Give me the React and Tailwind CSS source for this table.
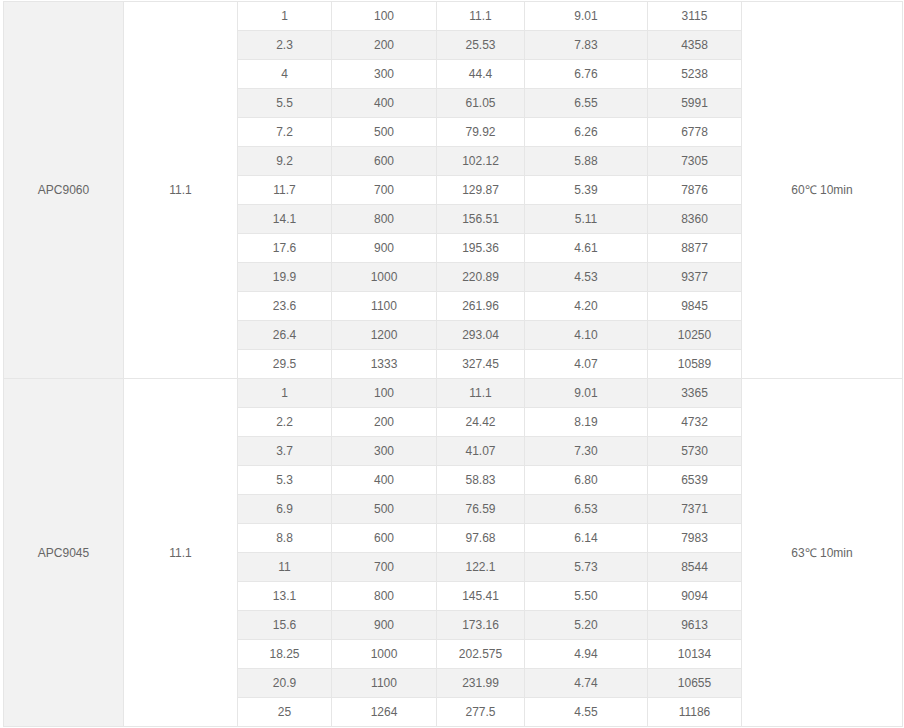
import React from "react";

const g1 = [
  ["1", "100", "11.1", "9.01", "3115"],
  ["2.3", "200", "25.53", "7.83", "4358"],
  ["4", "300", "44.4", "6.76", "5238"],
  ["5.5", "400", "61.05", "6.55", "5991"],
  ["7.2", "500", "79.92", "6.26", "6778"],
  ["9.2", "600", "102.12", "5.88", "7305"],
  ["11.7", "700", "129.87", "5.39", "7876"],
  ["14.1", "800", "156.51", "5.11", "8360"],
  ["17.6", "900", "195.36", "4.61", "8877"],
  ["19.9", "1000", "220.89", "4.53", "9377"],
  ["23.6", "1100", "261.96", "4.20", "9845"],
  ["26.4", "1200", "293.04", "4.10", "10250"],
  ["29.5", "1333", "327.45", "4.07", "10589"],
];
const g2 = [
  ["1", "100", "11.1", "9.01", "3365"],
  ["2.2", "200", "24.42", "8.19", "4732"],
  ["3.7", "300", "41.07", "7.30", "5730"],
  ["5.3", "400", "58.83", "6.80", "6539"],
  ["6.9", "500", "76.59", "6.53", "7371"],
  ["8.8", "600", "97.68", "6.14", "7983"],
  ["11", "700", "122.1", "5.73", "8544"],
  ["13.1", "800", "145.41", "5.50", "9094"],
  ["15.6", "900", "173.16", "5.20", "9613"],
  ["18.25", "1000", "202.575", "4.94", "10134"],
  ["20.9", "1100", "231.99", "4.74", "10655"],
  ["25", "1264", "277.5", "4.55", "11186"],
];

const groups = [
  { name: "APC9060", v: "11.1", temp: "60℃ 10min", rows: g1, offset: 0 },
  { name: "APC9045", v: "11.1", temp: "63℃ 10min", rows: g2, offset: 13 },
];

const td = "border border-[#e6e6e6] h-[29px] p-0 text-center align-middle";

export default function App() {
  return (
    <div className="bg-white w-[904px] h-[728px] pl-[3px] pt-[1px]" style={{ fontFamily: '"Liberation Sans", Arial, sans-serif' }}>
      <table className="table-fixed border-collapse w-[900px] text-[12px] text-[#666666]">
        <colgroup>
          <col className="w-[120px]" />
          <col className="w-[114px]" />
          <col className="w-[94px]" />
          <col className="w-[105px]" />
          <col className="w-[88px]" />
          <col className="w-[123px]" />
          <col className="w-[94px]" />
          <col className="w-[161px]" />
        </colgroup>
        <tbody>
          {groups.map((grp) =>
            grp.rows.map((r, i) => {
              const gray = (grp.offset + i) % 2 === 1;
              return (
                <tr key={grp.name + i} className={gray ? "bg-[#f2f2f2]" : "bg-white"}>
                  {i === 0 && (
                    <td rowSpan={grp.rows.length} className={td + " bg-[#f2f2f2]"}>
                      {grp.name}
                    </td>
                  )}
                  {i === 0 && (
                    <td rowSpan={grp.rows.length} className={td + " bg-white"}>
                      {grp.v}
                    </td>
                  )}
                  {r.map((c, j) => (
                    <td key={j} className={td}>
                      {c}
                    </td>
                  ))}
                  {i === 0 && (
                    <td rowSpan={grp.rows.length} className={td + " bg-white"}>
                      {grp.temp}
                    </td>
                  )}
                </tr>
              );
            })
          )}
        </tbody>
      </table>
    </div>
  );
}
